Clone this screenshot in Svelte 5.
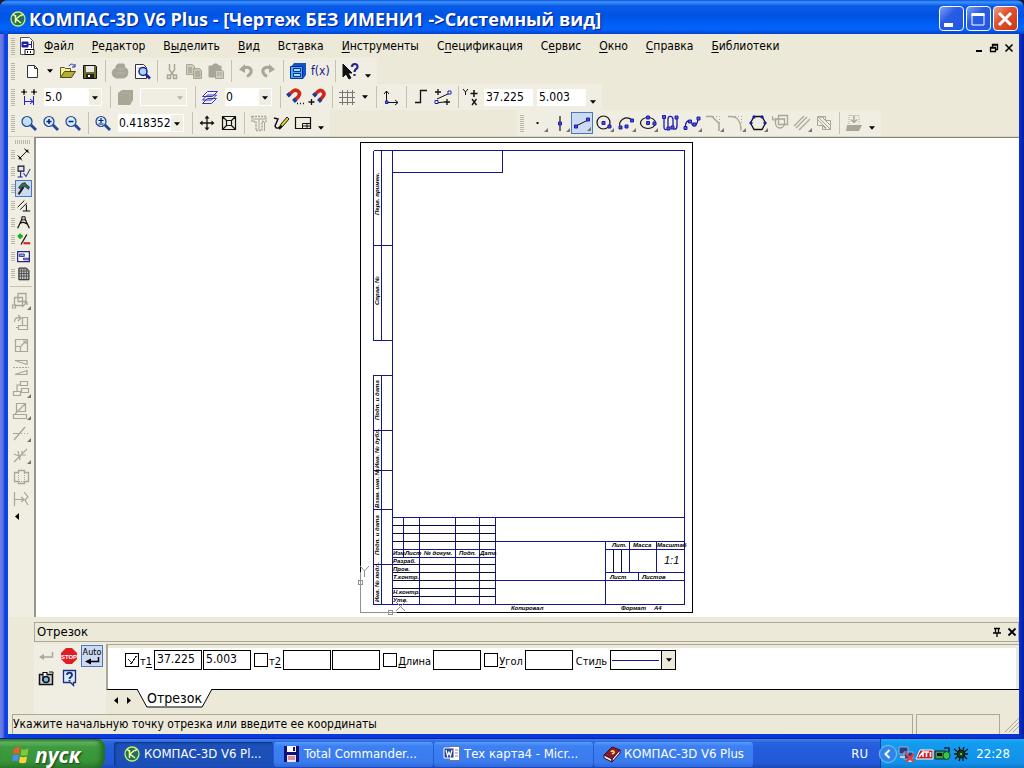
<script>
  const K = '#111';
  const B = '#1c1ca8';
  const G = '#a9a695';
  const N = 'none';

  // every glyph sits on an 18x18 grid: [path, stroke, fill, width, dash]
  const icons = {
    doc: [['M3.5 .5h9l4 4v13h-13z', '#555', '#fff'], ['M5 5h6v5H5z', B, B], ['M11 7.5h3M14.5 4v7', B, N], ['M6.5 7.5h3', '#fff', N], ['M8 12.5h9v5H8z', K, '#fff'], ['M10 15h1M13 15h1', K, N, 2]],
    new: [['M5 3h7l3 3v10H5z', N, '#fff'], ['M4.5 3.5v12h10v-9l-3-3z', '#333', N], ['M11.5 3.5v3h3', '#333', N]],
    open: [['M1.5 15.5v-10h4l1 1h5v3', '#5d5a13', '#f4efa0'], ['M1.5 15.5l4-6h11l-4 6z', '#4d4a10', '#b5ad3a'], ['M10 4c2-3 4-2 5.5 0M16 2v3h-3', B, N]],
    save: [['M2.5 3.5h12l1 1v12h-13z', K, '#6b6d28'], ['M5 4h8v6H5z', N, '#e9e9e9'], ['M5 12h8v4H5z', N, '#222'], ['M7 13h2v2H7z', N, '#fff']],
    print: [['M5 7V4l2-2h6l1 4 2 1 1 3-1 4-3 2H5l-3-2-1-4 2-3z', G, G], ['M5 11h9M7 7h6', '#bab7a8', N]],
    preview: [['M2.5 2.5h8l3 3v11h-11z', '#333', '#fff'], ['M4.5 6h3', '#999', N], ['M6 9.5a4 4 0 1 1 8 0 4 4 0 1 1-8 0', B, '#a9d7ee', 1.5], ['M13 12.5l4 4', B, N, 2.5]],
    cut: [['M6.500 2v6l4 5M11.500 2v6l-4 5', G, N, 1.5], ['M4.5 13h3v3.500h-3zM10.5 13h3v3.500h-3z', G, N, 1.5]],
    copy: [['M1.5 2.500h6l2 2v8h-8z', G, '#d0cdbd'], ['M3 6h4M3 8h4M3 10h4', G, N, 1.400], ['M8.5 6.500h6l2 2v8h-8z', G, '#c8c5b5'], ['M10 10h5M10 12h5M10 14h5', G, N, 1.400]],
    paste: [['M2 4h3l2-2h3l2 2h2v11H2z', G, G], ['M8.5 8.5h7l1 1v7h-8z', G, '#cfccbc'], ['M10 11h5M10 13h5', G, N]],
    undo: [['M6 6.500c5-3 9 0 8 4-1 2-2 3-4 4', G, N, 3], ['M2 7.500L8 2v9z', N, G]],
    redo: [['M12 6.500c-5-3-9 0-8 4 1 2 2 3 4 4', G, N, 3], ['M16 7.500L10 2v9z', N, G]],
    manager: [['M2 5l3-4h12v12l-3 4H2z', N, '#1552c8'], ['M1.5 4.5h12v12h-12z', '#0a2f96', '#4da8ee'], ['M4.5 6.5h7v3h-7zM4.5 11.5h7v3h-7z', '#0a2f96', '#a6e0fa']],
    fx: [],
    help: [['M2 2v13l3-3 3 5 2-1-3-5h4z', K, K], ['M11 5c0-4 6-4 5.5 0 0 2-3 2-3 5M13.5 12v2', '#25258d', N, 2.2]],
    step: [['M4 1v6M1 4h6M14 1v6M11 4h6', K, N], ['M3 4h2M13 4h2', K, N, 2.5], ['M4.5 8v9M13.5 8v9M5 13.5h8M10 11l3 2.5-3 2.5', '#2222d0', N]],
    macro: [['M2 5l4-3h11v10l-3 5H2z', N, G], ['M5 5h9v9', '#b4b1a1', N]],
    layers: [['M1.5 15.5l5-5h9l-5 5zM1.5 12l5-5h9l-5 5zM1.5 8.5l5-5h10l-5 5z', '#3434b8', '#f2f2fa']],
    magnet: [['M2.500 7L6.500 3.500c4-3.500 9 1 6 5L8.500 12.500', '#d02818', N, 3.5], ['M1.500 8l2.500-2.300M7.500 13.500l2.500-2.500', '#153ea8', N, 4], ['M11 15.5h1M14 15.5h1M17 15.5h1', K, N, 1.5]],
    magnet2: [['M6.500 7L10 3.500c3-3 8 1 5 5L11.500 12.500', '#d02818', N, 3.5], ['M5.500 8l2.300-2.300M10.500 13.500l2.500-2.500', '#153ea8', N, 4], ['M3.500 11v6M.5 14h6', K, N, 1.3]],
    grid: [['M1 4.5h16M1 9.5h16M1 14.5h16M4.5 2v15M9.5 2v15M14.5 2v15', '#777', N]],
    ucs: [['M4.5 14V3M2 6l2.5-3L7 6M5 14.5h11M13 12l3 2.5-3 2.5', K, N], ['M3.500 13h2.500v2.500H3.500z', B, '#6a6ae0']],
    ortho: [['M3 14.5h5.5v-12H15', K, N, 1.3]],
    snaps: [['M4 1v6M1 4h6M13 11v6M10 14h6', K, N, 1.3], ['M3 11L16 5M2 15l8-1', K, N], ['M1 12.500h3v3H1zM14 3h3v3h-3z', B, '#fff']],
    yx: [['M1 1l2.5 3L6 1M3.5 4v3', K, N], ['M12 2v7M8.5 5.5h7', K, N, 1.5], ['M10 11l4.500 6M14.500 11l-4.500 6', K, N, 1.3]],
    zoom: [['M2 7.5a5 5 0 1 1 10 0 5 5 0 1 1-10 0', '#24449b', '#bfe4ee', 1.2], ['M11 11l5 5', '#24449b', N, 2.8]],
    zoomIn: [['M2 7.5a5 5 0 1 1 10 0 5 5 0 1 1-10 0', '#24449b', '#d4eef4', 1.2], ['M11 11l5 5', '#24449b', N, 2.8], ['M4.5 7.5h5M7 5v5', '#111a80', N, 1.5]],
    zoomOut: [['M2 7.5a5 5 0 1 1 10 0 5 5 0 1 1-10 0', '#24449b', '#d4eef4', 1.2], ['M11 11l5 5', '#24449b', N, 2.8], ['M4.5 7.5h5', '#111a80', N, 1.5]],
    zoomBoth: [['M2 7.5a5 5 0 1 1 10 0 5 5 0 1 1-10 0', '#24449b', '#d4eef4', 1.2], ['M11 11l5 5', '#24449b', N, 2.8], ['M4.5 6.5h5M7 4v5M4.5 10h5', '#111a80', N, 1.2]],
    pan: [['M9 3v12M3 9h12', K, N, 1.3], ['M9 1.500l2.500 3h-5zM9 16.500l2.500-3h-5zM1.500 9l3-2.500v5zM16.500 9l-3-2.500v5z', N, K]],
    fit: [['M2.5 2.5h13v13h-13zM6.5 6.5h5v5h-5zM3 3l4 4M15 3l-4 4M3 15l4-4M15 15l-4-4', K, N, 1.2]],
    params: [['M2 2.5h14v5h-4v9H6v-9H2z', G, N, 1.5, '2 1'], ['M3 5h12M9 5v11M14.500 8v9', G, N]],
    pen: [['M2 4l4 1-3 7c1 3 4 3 6-1', K, N, 1.5], ['M8 14l1-4 6-7 2 2-6 7z', '#222', '#d8cc35'], ['M7 15l3-3', K, N, 2]],
    view: [['M1.5 3.5h15v11h-15z', K, N, 1.2], ['M8.5 9.5h8v5h-8zM9 12h7M13 10v4', K, N]],
    point: [['M7.5 9h2', K, N, 2]],
    vline: [['M9 2v15', K, N, 1.2], ['M7.5 8h3v3h-3z', B, '#4a4ae0']],
    line: [['M3 12l12-6', K, N], ['M1.5 11h3v3h-3zM13.5 4h3v3h-3z', B, '#4a4ae0']],
    circle: [['M2 8.5a6.5 6.5 0 1 1 13 0 6.5 6.5 0 1 1-13 0', K, N, 1.2], ['M7 7.5h3v3H7zM13 11h3v3h-3z', B, '#4a4ae0']],
    arc: [['M3 13C1 6 9 1 15 6', K, N, 1.2], ['M2 12h3v3H2zM8 11h3v3H8zM13.5 5h3v3h-3z', B, '#4a4ae0']],
    ellipse: [['M1.500 9a7.5 5.5 0 1 1 15 0 7.5 5.5 0 1 1-15 0', K, N, 1.2], ['M7.5 7.5h3v3h-3zM7.5 2h3v3h-3zM14 8h3v3h-3z', B, '#4a4ae0']],
    curves: [['M3 4v9c0 4 4 3 4 0V5c0-3 4-4 5 0v8c0 3 4 3 4-1V4', B, N, 1.3], ['M1.5 1.5h3v3h-3zM6 13h3v3H6zM10 12h3v3h-3zM14 2h3v3h-3z', B, '#5a5ae0']],
    spline: [['M2 14c1-11 7-7 7-4 1 4 6 1 6-6', B, N, 1.3], ['M1 12.500h3v3H1zM5.5 6h3v3h-3zM10 9h3v3h-3zM14 3h3v3h-3z', B, '#5a5ae0']],
    fillet: [['M1 2.500h6l7 7V17', G, N, 1.5], ['M8 2.500h6.5V10', G, N, 1, '1 2']],
    chamfer: [['M1 2.500h3c6 0 10 5 10 14', G, N, 1.5], ['M8 2.500h6.5V10', G, N, 1, '1 2']],
    polygon: [['M5 2.5h8L16.5 9 13 15.5H5L1.5 9z', K, N, 1.3], ['M1 8h2v2H1zM4 2h2v2H4zM12 2h2v2h-2zM15 8h2v2h-2z', B, B]],
    contour: [['M1.5 2v4h4M3.500 4L1.500 6', G, N], ['M7.5 1.5h9v9h-9zM4.5 9a4.5 5 0 1 0 9 0V5h-9z', G, N, 1.3]],
    hatch: [['M1 12L11 2M3 14L14 3M6 16L17 5', G, N, 1.2]],
    region: [['M2.5 2.5h8v4h5v9h-8v-4h-5zM3 6l8 8M3 3l12 12M7 3l8 8M4 3l5 0M8 12l3 3', G, N]],
    base: [['M2 11h15l-3 6H1z', N, G], ['M4 10V1.500h10v8', G, N, 1, '1 1'], ['M9 2v6M6 5.500l3 3 3-3', G, N, 1.5]],

    dim: [['M4 14L14 4M2 10l5 6M10 2l6 5', K, N, 1.2], ['M3 15l1-4 3 3zM15 3l-1 4-3-3z', N, K]],
    symbols: [['M2.5 2.5h7v6h-7z', K, '#dfe4ff', 1.3], ['M5.5 9v6M2 15.5h6', B, N, 1.3], ['M9 11l3 4 5-9', '#3a3a9a', N, 1.3]],
    hammer: [['M3 8l4-5 4-1 1 2 4 3-1 3-4-3-2-1-3 4z', '#17362c', '#3a6a58'], ['M9 7l-6 9', '#222', N, 2.5]],
    paramCol: [['M2 11l8-8M5 14l8-8', K, N, 1.2], ['M12.5 8v7M8 15.5h9', K, N, 1.3]],
    measure: [['M8 3L2 16M10 3l6 13M5 10c3-2 6-1 8 1', K, N, 1.5], ['M7 2h4v4H7z', K, '#bbb']],
    edit: [['M5 2v6M2 5h6', '#12b11d', N, 3], ['M6 15l7-12', K, N, 1.5], ['M9 13.5h8', '#d91c1c', N, 2.5]],
    spec: [['M2 3h14v12H2z', '#26268c', '#fff', 1.5], ['M4 6h6v3H4zM9 11h6v2H9z', '#26268c', '#91a5e6']],
    table: [['M3.5 2.5h9l3 3v11h-12z', K, '#c8c8c8', 1.2], ['M3 6h12M3 9h12M3 12h12M6.5 3v13M9.5 3v13M12.5 3v13', '#444', N]],
    move: [['M6 1.500h8v8H6zM2.5 5.5h8v8h-8z', G, N, 1.3], ['M.5 13h3v3H.5zM10 15l5-5M12 10h3v3', G, N, 1.2]],
    rotate: [['M2.5 8c0-4 2-5 6-4M6 1l3 3-3 3M6.5 11.5h9v4h-9zM10.5 3.5h5v8h-5zM4 13.500h3', G, N, 1.2]],
    scale: [['M3.5 3.5h12v12h-12zM3.5 10.5h5v5h-5zM9 10l5-5M11 5h3v3', G, N, 1.2]],
    mirror: [['M3 2.500h12v4zM15 12.500v4H3z', G, N, 1.2], ['M1 9.5h16', G, N, 1, '2 1']],
    copies: [['M8.5 1.5h7v4h-7zM9.5 8.5h7v4h-7zM1.5 11.5h7v4h-7zM5 11V5h3', G, N, 1.2]],
    deform: [['M4.5 1.5h9v8h-9zM1.5 12.5h13v4h-13zM3 12L13 2', G, N, 1.2]],
    trim: [['M2 16L13 3', G, N, 1.3], ['M1 9.5h7', G, N], ['M9 9.500h8', G, N, 1, '1 2']],
    split: [['M2 16L15 3M2 8l7 3M6 5l2 9M10 5v4h4', G, N, 1.2]],
    outline: [['M2.5 4.5h4v-2h6v2h4v9h-4v2h-6v-2h-4z', G, N, 1.3], ['M6.5 5v8M12.5 5v8M7 13.500h6', G, N, 1, '1 1']],
    align: [['M2.5 2v14M3 9.5h9M9 7l3 2.5L9 12M12 2l4 5-3 3 3 5', G, N, 1.2]],

    enter: [['M15.5 5v5H4', '#aaa798', N, 1.5], ['M2 10l5-3v6z', N, '#aaa798']],
    stop: [['M6 1h6l5 5v6l-5 5H6l-5-5V6z', N, '#e01d24']],
    camera: [['M2.5 5.5h13v10h-13z', K, '#c9ccd8', 1.5], ['M6 12V3.5h4V6', K, '#fff', 1.2], ['M6 10.5a3 3 0 1 1 6 0 3 3 0 1 1-6 0', K, '#81bde0', 1.5], ['M12 3h4v2', K, N]],
    ask: [['M3.5 1.5h12v12h-2v3l-3-3h-7z', '#1c2d7c', '#d9ebff', 1.3], ['M7 6c0-3 5-3 5 0 0 2-2.5 2-2.5 4M9.5 11v1.5', '#1c2d7c', N, 1.8]],

    kompas: [['M2 9a7 7 0 1 1 14 0 7 7 0 1 1-14 0', '#c9f06a', '#24705a', 1.3], ['M6.5 5v8M12 5l-5 4 5 4M4 4l2 2M14 4l-2 2', '#eefc9a', N, 1.5]],
    floppy: [['M1 1h15v16H1z', N, '#10107a'], ['M4 1h9v6H4z', N, '#fff'], ['M4 10h9v7H4z', N, '#e8e8f8'], ['M5 12h7M5 14h7', '#c33', N], ['M10 2h2v4h-2z', N, '#10107a']],
    word: [['M6.5 1.5h10v14h-10z', '#778', '#fff'], ['M12 5h3M12 8h3M12 11h3', '#88a', N], ['M1 3h10v10H1z', '#fff', '#233f8f'], ['M3 5l1.5 6L6 7l1.5 4L9 5', '#fff', N, 1.2]],
    book: [['M1 10L9 2l8 3-8 9z', '#3d0c18', '#8e1a32'], ['M1 10v3l8 4v-3zM9 14l8-9v3l-8 9z', '#3d0c18', '#eee'], ['M8 7c1-2 4-1 3 1l-2 1', '#ffdf5a', N, 1.5]],
    net: [['M1 2h9v7H1zM6 7h9v7H6z', '#aab', '#233f8f'], ['M2 12h5M9 16h7', '#ccd', N, 2], ['M8 9l8 8M16 9l-8 8', '#e33c3c', N, 2.2]],
    ati: [['M4 5h13v9H0z', '#fff', '#d01d22'], ['M3 12l4-5v5M8 7h5M10.500 7v5M14.5 7v5', '#fff', N, 1.6]],
    plug: [['M1 6h11v8H1z', '#123', '#3f9a4a'], ['M3 8h5v3H3z', N, '#111'], ['M9 10.500a3.500 4 0 1 1 7 0 3.500 4 0 1 1-7 0', '#0b4a18', '#39c24b'], ['M10 3h5v4', '#123', N, 1.5]],
    spider: [['M5 9a4 4 0 1 1 8 0 4 4 0 1 1-8 0', K, '#173d13'], ['M2 4l4 3M2 9h3M3 14l3-3M16 4l-4 3M16 9h-3M15 14l-3-3M7 2l1 3M12 2l-1 3M7 16l1-3M11 16v-3', K, N, 1.3], ['M8 8h2v2H8z', N, '#5ec24a']]
  };

  const menu = [['', 'Ф', 'айл'], ['', 'Р', 'едактор'], ['В', 'ы', 'делить'], ['', 'В', 'ид'], ['Вст', 'а', 'вка'], ['', 'И', 'нструменты'],
    ['С', 'п', 'ецификация'], ['С', 'е', 'рвис'], ['', 'О', 'кно'], ['', 'С', 'правка'], ['', 'Б', 'иблиотеки']];

  const standard = [['new', 'Создать'], 'caret', ['open', 'Открыть'], ['save', 'Сохранить'], 'sep', ['print', 'Печать'], ['preview', 'Просмотр'], 'sep',
    ['cut', 'Вырезать'], ['copy', 'Копировать'], ['paste', 'Вставить'], 'sep', ['undo', 'Отменить'], ['redo', 'Повторить'], 'sep',
    ['manager', 'Менеджер библиотек'], ['fx', 'Переменные'], 'sep', ['help', 'Справка'], 'more'];

  const geometry = [['point', 'Точка', 1], ['vline', 'Вспомогательная прямая', 1], ['line', 'Отрезок', 1], ['circle', 'Окружность', 1], ['arc', 'Дуга', 1],
    ['ellipse', 'Эллипс', 1], ['curves', 'Непрерывный ввод'], ['spline', 'Кривая Безье', 1], ['fillet', 'Фаска', 1], ['chamfer', 'Скругление', 1],
    ['polygon', 'Многоугольник', 1], ['contour', 'Собрать контур'], ['hatch', 'Эквидистанта', 1], ['region', 'Штриховка'], 'sep', ['base', 'Спроецировать'], 'more'];

  const panels = [['dim', 'Размеры'], ['symbols', 'Обозначения'], ['hammer', 'Редактирование'], ['paramCol', 'Параметризация'],
    ['measure', 'Измерения'], ['edit', 'Выделение'], ['spec', 'Спецификация'], ['table', 'Отчеты']];

  const editing = [['move', 'Сдвиг', 1], ['rotate', 'Поворот'], ['scale', 'Масштабирование'], ['mirror', 'Симметрия'], ['copies', 'Копирование', 1],
    ['deform', 'Деформация', 1], ['trim', 'Усечь кривую', 1], ['split', 'Разбить кривую', 1], ['outline', 'Собрать'], ['align', 'Продлить']];

  const tasks = [['kompas', 'КОМПАС-3D V6 Pl...'], ['floppy', 'Total Commander...'], ['word', 'Тех карта4 - Micr...'], ['book', 'КОМПАС-3D V6 Plus']];

  const sideLabels = [[73, 'Перв. примен.'], [163, 'Справ. №'], [278, 'Подп. и дата'], [326, 'Инв. № дубл.'], [366, 'Взам. инв. №'], [413, 'Подп. и дата'], [460, 'Инв. № подл.']];

  const stamp = [[33, 413, 'Изм.'], [45, 413, 'Лист'], [64, 413, '№ докум.'], [99, 413, 'Подп.'], [120, 413, 'Дата'],
    [33, 421, 'Разраб.'], [33, 429, 'Пров.'], [33, 437, 'Т.контр.'], [33, 452, 'Н.контр.'], [33, 460, 'Утв.'],
    [252, 405, 'Лит.'], [273, 405, 'Масса'], [297, 405, 'Масштаб'], [250, 437, 'Лист'], [282, 437, 'Листов'],
    [151, 468, 'Копировал'], [261, 468, 'Формат'], [294, 468, 'A4']];

  let t1 = true;
</script>

{#snippet icon(name)}
  <svg class="icon" width="18" height="18" viewBox="0 0 18 18" aria-hidden="true">
    {#each icons[name] as [d, stroke, fill, width = 1, dash = 'none']}
      <path {d} {stroke} {fill} stroke-width={width} stroke-dasharray={dash} />
    {/each}
    {#if name === 'fx'}
      <text x="0" y="13" class="fx">f(x)</text>
    {:else if name === 'stop'}
      <text x="9" y="12" class="stop">STOP</text>
    {/if}
  </svg>
{/snippet}

{#snippet arrow()}
  <svg class="arrow" width="7" height="4" viewBox="0 0 7 4" aria-hidden="true"><path d="M0 0h7L3.5 4z" fill="currentColor" /></svg>
{/snippet}

{#snippet tool(item)}
  {#if item === 'sep'}
    <span class="sep"></span>
  {:else if item === 'caret'}
    <button class="caret" aria-label="Список">{@render arrow()}</button>
  {:else if item === 'more'}
    <button class="caret low" aria-label="Параметры панели">{@render arrow()}</button>
  {:else}
    <button class="tool" class:active={item[0] === 'line' || item[0] === 'hammer'} class:corner={item[2]} aria-label={item[1]}>{@render icon(item[0])}</button>
  {/if}
{/snippet}

{#snippet combo(label, value, size, disabled)}
  <span class="combo {size}" class:disabled>
    <select aria-label={label} {disabled}><option>{value}</option></select>
    {@render arrow()}
  </span>
{/snippet}

<div class="desktop">
  <main class="window">
    <header class="titlebar">
      {@render icon('kompas')}
      <h1>КОМПАС-3D V6 Plus - [Чертеж БЕЗ ИМЕНИ1 -&gt;Системный вид]</h1>
      <button class="win" aria-label="Свернуть"><svg width="22" height="22" viewBox="0 0 22 22"><path d="M4 15h9v4H4z" fill="#fff" /></svg></button>
      <button class="win" aria-label="Развернуть"><svg width="22" height="22" viewBox="0 0 22 22"><path d="M5 6h12v11H5z" stroke="#fff" fill="none" /><path d="M4.500 5h13v3h-13z" fill="#fff" /></svg></button>
      <button class="win close" aria-label="Закрыть"><svg width="22" height="22" viewBox="0 0 22 22"><path d="M5 5l12 12M17 5L5 17" stroke="#fff" stroke-width="3" /></svg></button>
    </header>

    <div class="client">
      <nav class="menubar">
        <span class="grip"></span>
        {@render icon('doc')}
        {#each menu as [before, key, after]}
          <button>{before}<u>{key}</u>{after}</button>
        {/each}
        <span class="mdi">
          <button aria-label="Свернуть документ"><svg width="10" height="10" viewBox="0 0 10 10"><path d="M2 8h6" stroke="#000" stroke-width="2" /></svg></button>
          <button aria-label="Восстановить документ"><svg width="10" height="10" viewBox="0 0 10 10"><path d="M3.5 4V1.5h5v5H7M1.5 4.5h5v4h-5zM3 2h6M1 5h6" stroke="#000" fill="none" stroke-width="1.3" /></svg></button>
          <button aria-label="Закрыть документ"><svg width="10" height="10" viewBox="0 0 10 10"><path d="M1.5 1.5l7 7M8.5 1.5l-7 7" stroke="#000" stroke-width="1.6" /></svg></button>
        </span>
      </nav>

      <div class="row">
        <div class="toolbar">
          <span class="grip"></span>
          {#each standard as item}{@render tool(item)}{/each}
        </div>
      </div>

      <div class="row">
        <div class="toolbar state">
          <span class="grip"></span>
          {@render tool(['step', 'Шаг курсора'])}
          {@render combo('Шаг курсора', '5.0', 'mid', false)}
          {@render tool('sep')}
          {@render tool(['macro', 'Состояние видов'])}
          {@render combo('Вид', '', 'small', true)}
          {@render tool('sep')}
          {@render tool(['layers', 'Слои'])}
          {@render combo('Слой', '0', 'small', false)}
          {@render tool('sep')}
          {@render tool(['magnet', 'Установка привязок'])}
          {@render tool(['magnet2', 'Запретить привязки'])}
          {@render tool('sep')}
          {@render tool(['grid', 'Сетка'])}
          {@render tool('caret')}
          {@render tool('sep')}
          {@render tool(['ucs', 'Локальная СК'])}
          {@render tool('sep')}
          {@render tool(['ortho', 'Ортогональное черчение'])}
          {@render tool(['snaps', 'Округление'])}
          {@render tool('sep')}
          {@render icon('yx')}
          <input class="coord" aria-label="Координата X" value="37.225">
          <input class="coord" aria-label="Координата Y" value="5.003">
          {@render tool('more')}
        </div>
      </div>

      <div class="row">
        <div class="toolbar zooms">
          <span class="grip"></span>
          {@render tool(['zoom', 'Увеличить рамкой'])}
          {@render tool(['zoomIn', 'Увеличить'])}
          {@render tool(['zoomOut', 'Уменьшить'])}
          {@render tool('sep')}
          {@render tool(['zoomBoth', 'Приблизить'])}
          {@render combo('Масштаб', '0.418352', 'wide', false)}
          {@render tool('sep')}
          {@render tool(['pan', 'Сдвинуть'])}
          {@render tool(['fit', 'Показать все'])}
          {@render tool('sep')}
          {@render tool(['params', 'Параметризация'])}
          {@render tool(['pen', 'Перестроить'])}
          {@render tool(['view', 'Вид'])}
          {@render tool('more')}
        </div>
        <div class="toolbar geometry">
          <span class="grip"></span>
          {#each geometry as item}{@render tool(item)}{/each}
        </div>
      </div>

      <div class="work">
        <aside>
          <span class="grip flat"></span>
          {#each panels as item}
            <div class="panel-key"><span class="grip"></span>{@render tool(item)}</div>
          {/each}
          <hr>
          {#each editing as item}{@render tool(item)}{/each}
          <button class="scroll" aria-label="Далее"><svg width="4" height="7" viewBox="0 0 4 7"><path d="M4 0v7L0 3.5z" /></svg></button>
        </aside>

        <section class="canvas">
          <svg width="344" height="475" viewBox="-4 0 344 475" role="img" aria-label="Лист чертежа">
            <path class="sheet" d="M.5.5h332v470H.5z" />
            <path class="ink" d="M13.5 8.5h311v454h-311M13.5 8.5v190h19M13.5 103.5h19M21.5 8.5v190M32.5 8.5v454M142.5 8.5v22h-110" />
            <path class="ink" d="M32.5 233.5h-19v229M21.5 233.5v229M13.5 288.5h19M13.5 328.5h19M13.5 367.5h19M13.5 422.5h19" />
            <path class="ink" d="M32.5 375.5h292M135.5 375.5v87M43.5 375.5v40M59.5 375.5v87M95.5 375.5v87M119.5 375.5v87M32.5 407.5h103M32.5 415.5h103M135.5 399.5h189M135.5 438.5h189M245.5 399.5v63M245.5 407.5h79M245.5 430.5h79M269.5 399.5v31M296.5 399.5v31M278.5 430.5v8" />
            <path class="thin" d="M32.5 383.5h103M32.5 391.5h103M32.5 399.5h103M32.5 422.5h103M32.5 430.5h103M32.5 438.5h103M32.5 446.5h103M32.5 454.5h103M253.5 408v22M261.5 408v22" />
            {#each sideLabels as [y, label]}
              <text class="tiny" transform="rotate(-90 19 {y})" x="19" y={y}>{label}</text>
            {/each}
            {#each stamp as [x, y, label]}
              <text class="tiny" {x} {y}>{label}</text>
            {/each}
            <text class="ratio" x="304" y="422">1:1</text>
            <path class="blank" d="M.5 430v40.5h36" />
            <path class="axis" d="M.5 430v40.5h36M-1.5 442.5h4v-4h-4zM28 468.5h4v4h-4z" />
            <path class="letters" d="M0 424l4.500 5v6M9 424l-4.500 5M36 460l9 9M45 460l-9 9" />
          </svg>
        </section>
      </div>

      <section class="props">
        <header>
          <h2>Отрезок</h2>
          <button aria-label="Закрепить"><svg width="10" height="10" viewBox="0 0 10 10"><path d="M2 1.5h6M3.5 1v5M6.5 1v5M1 6h8M5 6v4" stroke="#000" stroke-width="1.3" /></svg></button>
          <button aria-label="Закрыть панель"><svg width="10" height="10" viewBox="0 0 10 10"><path d="M1.5 1.5l7 7M8.5 1.5l-7 7" stroke="#000" stroke-width="1.8" /></svg></button>
        </header>
        <div class="props-main">
          <div class="special">
            {@render tool(['enter', 'Создать объект'])}
            {@render tool(['stop', 'Прервать команду'])}
            <button class="tool active auto"><span>Auto</span><svg width="16" height="8" viewBox="0 0 16 8" aria-hidden="true"><path d="M14.5 0v4.5H5" stroke="#000" fill="none" stroke-width="1.5" /><path d="M1 4.5l6-3v6z" /></svg></button>
            {@render tool(['camera', 'Запомнить состояние'])}
            {@render tool(['ask', 'Справка'])}
          </div>
          <div class="props-body">
            <form>
              <label class="check"><input type="checkbox" bind:checked={t1}><span>т<u>1</u></span></label>
              <input class="field" aria-label="т1 X" value="37.225">
              <input class="field" aria-label="т1 Y" value="5.003">
              <label class="check"><input type="checkbox"><span>т<u>2</u></span></label>
              <input class="field" aria-label="т2 X">
              <input class="field" aria-label="т2 Y">
              <label class="check"><input type="checkbox"><span><u>Д</u>лина</span></label>
              <input class="field" aria-label="Длина">
              <label class="check"><input type="checkbox"><span><u>У</u>гол</span></label>
              <input class="field" aria-label="Угол">
              <label class="style-label" for="style">Сти<u>л</u>ь</label>
              <span class="style">
                <select id="style"><option label=" "></option></select>
                <span class="stroke"></span>
                <span class="drop">{@render arrow()}</span>
              </span>
            </form>
            <div class="tabs">
              <button class="turn" aria-label="Назад"><svg width="4" height="7" viewBox="0 0 4 7"><path d="M4 0v7L0 3.5z" /></svg></button>
              <button class="turn" aria-label="Вперед"><svg width="4" height="7" viewBox="0 0 4 7"><path d="M0 0v7l4-3.5z" /></svg></button>
              <button class="tab">
                <svg viewBox="0 0 76 19" preserveAspectRatio="none" aria-hidden="true"><path d="M0 0l10 18h56L76 0" fill="#fff" stroke="#000" /></svg>
                <span>Отрезок</span>
              </button>
            </div>
          </div>
        </div>
      </section>

      <footer class="status">
        <p>Укажите начальную точку отрезка или введите ее координаты</p>
        <span class="cell"></span>
        <svg width="16" height="18" viewBox="0 0 16 18" aria-hidden="true"><path d="M2 18L16 4M6 18L16 8M10 18l6-6" stroke="#aca899" fill="none" /></svg>
      </footer>
    </div>
  </main>

  <footer class="taskbar">
    <button class="start">
      <svg width="20" height="20" viewBox="0 0 20 20" aria-hidden="true">
        <path d="M3 4c2-2 4-2 6-1L8 9C6 8 4 8 2 9z" fill="#ee5a2c" />
        <path d="M10.5 4c2 1 4 1 7-1l-1 7c-3 1-5 1-7 0z" fill="#82c83c" />
        <path d="M2 10.5c2-1 4-1 6 0l-1 6c-2-1-4-1-6 0z" fill="#4b8df0" />
        <path d="M9 11.5c2 1 4 1 7 0l-1 6c-2 1-5 1-7 0z" fill="#fbd33b" />
      </svg>
      пуск
    </button>
    <div class="tasks">
      {#each tasks as [glyph, name], i}
        <button class:current={i === 0}>{@render icon(glyph)}<span>{name}</span></button>
      {/each}
    </div>
    <span class="lang">RU</span>
    <div class="tray">
      <button class="expand" aria-label="Показать значки"><svg width="16" height="16" viewBox="0 0 16 16"><path d="M9.5 4L5.5 8l4 4" stroke="#fff" fill="none" stroke-width="2" /></svg></button>
      {#each ['net', 'ati', 'plug', 'spider'] as name}{@render icon(name)}{/each}
      <time>22:28</time>
    </div>
  </footer>
</div>

<style>
  :global(body) {
    background: #1c1c24;
  }

  .desktop {
    display: flex;
    flex-direction: column;
    min-height: 100vh;
    overflow: hidden;
    font-family: 'DejaVu Sans Condensed', 'DejaVu Sans', sans-serif;
    font-size: 12px;
    line-height: 16px;
    color: #000;
  }

  .desktop *,
  .desktop *::before,
  .desktop *::after {
    box-sizing: border-box;
  }

  button, input, select {
    margin: 0;
    padding: 0;
    border: 0;
    border-radius: 0;
    background: none;
    font: inherit;
    color: inherit;
  }

  svg {
    display: block;
    flex: none;
  }

  h1, h2, p {
    margin: 0;
    font: inherit;
  }

  .window {
    display: flex;
    flex-direction: column;
    flex: 1;
    padding: 0 5px 4px 8px;
    background: linear-gradient(90deg, #7080e8 0, #5a70e0 3px, #0a3be0 5px, #1148e8 7px, #0a3be0 9px, #0a34d8 calc(100% - 5px), #001ba0 100%);
    border-bottom: 1px solid #0a1f9c;
    border-radius: 8px 8px 0 0;
  }

  .titlebar {
    display: flex;
    align-items: center;
    gap: 2px;
    height: 34px;
    margin: 0 -5px 0 -8px;
    padding: 3px 6px 0 9px;
    border-radius: 8px 8px 0 0;
    background: linear-gradient(#0a52dc 0, #3c94fa 2px, #0a5ae8 6px, #0054e3 16px, #0062f8 26px, #0560f8 30px, #0040c8 34px);
  }

  h1 {
    flex: 1;
    overflow: hidden;
    white-space: nowrap;
    font: bold 18px/24px 'Open Sans', sans-serif;
    color: #fff;
    text-shadow: 1px 1px 1px #0a1883;
  }

  .win {
    width: 25px;
    height: 25px;
    border: 1px solid #fff;
    border-radius: 4px;
    background: linear-gradient(135deg, #7ba2f5, #2a5ce4 40%, #2258e0);
  }

  .win.close {
    background: linear-gradient(135deg, #f0a08a, #e0532f 40%, #c93a14);
  }

  .client {
    display: flex;
    flex-direction: column;
    flex: 1;
    background: #ece9d8;
  }

  .grip {
    flex: none;
    width: 4px;
    height: 17px;
    margin: 0 6px 0 3px;
    background: repeating-linear-gradient(#b9b6a6 0, #b9b6a6 1px, transparent 1px, transparent 2px);
  }

  .menubar {
    display: flex;
    align-items: center;
    height: 24px;
  }

  .menubar .grip {
    margin-right: 2px;
  }

  .menubar > button {
    padding: 0 9px;
    line-height: 20px;
    white-space: nowrap;
  }

  u {
    text-underline-offset: 2px;
  }

  .mdi {
    display: flex;
    gap: 5px;
    margin: 4px 5px 0 auto;
  }

  .row {
    display: flex;
    height: 26px;
  }

  .toolbar {
    display: flex;
    align-items: center;
    height: 26px;
    padding-right: 2px;
    background: #f0eee2;
    border-radius: 0 3px 3px 0;
  }

  .geometry {
    margin-left: auto;
    margin-right: 138px;
  }

  .geometry .grip,
  .state .grip,
  .zooms .grip {
    margin-right: 3px;
  }

  .tool {
    position: relative;
    display: flex;
    align-items: center;
    justify-content: center;
    flex: none;
    width: 22px;
    height: 22px;
  }

  .tool.active {
    border: 1px solid #4a78c0;
    background: #ccdaf2;
  }

  .corner::after {
    content: '';
    position: absolute;
    right: 1px;
    bottom: 2px;
    border: 2px solid transparent;
    border-right-color: #77756a;
    border-bottom-color: #77756a;
  }

  .sep {
    flex: none;
    width: 8px;
    height: 22px;
    background: linear-gradient(#c5c2b2, #c5c2b2) center / 1px 100% no-repeat;
  }

  .caret {
    display: flex;
    align-items: center;
    justify-content: center;
    width: 14px;
    height: 22px;
  }

  .caret.low {
    align-items: flex-end;
    padding-bottom: 4px;
  }

  .arrow {
    width: 6px;
  }

  .combo {
    position: relative;
    display: block;
    height: 18px;
    margin: 0 4px;
    background: #f0eee2;
    border: 1px solid #fff;
  }

  .combo.mid {
    width: 58px;
  }

  .combo.small {
    width: 47px;
  }

  .combo.wide {
    width: 66px;
  }

  .combo select {
    display: block;
    width: calc(100% - 12px);
    height: 16px;
    background: #fff;
    appearance: none;
    outline: none;
    overflow: hidden;
    line-height: 16px;
  }

  .combo.disabled {
    color: #b5b2a2;
  }

  .combo.disabled select {
    background: #f0eee2;
    opacity: 1;
  }

  .combo .arrow {
    position: absolute;
    right: 3px;
    top: 7px;
  }

  .coord {
    width: 49px;
    height: 17px;
    margin-left: 4px;
    padding-left: 2px;
    background: #fff;
  }

  .fx {
    font: 12px 'DejaVu Sans Condensed', sans-serif;
    fill: #18188c;
  }

  .icon {
    overflow: visible;
  }

  .stop {
    font: bold 6px 'Liberation Sans', sans-serif;
    fill: #fff;
    text-anchor: middle;
  }

  .work {
    display: flex;
    flex: 1;
    border-top: 1px solid #d8d5c4;
  }

  aside {
    display: flex;
    flex-direction: column;
    align-items: center;
    width: 26px;
    padding-top: 3px;
    background: #f0eee2;
  }

  .flat {
    width: 16px;
    height: 4px;
    margin: 0 0 2px 3px;
    background: repeating-linear-gradient(90deg, #b9b6a6 0, #b9b6a6 1px, transparent 1px, transparent 2px);
  }

  .panel-key {
    display: flex;
    align-items: center;
    width: 26px;
    height: 17px;
  }

  .panel-key .grip {
    height: 10px;
    margin: 0;
    margin-left: 3px;
  }

  .panel-key .tool {
    width: 17px;
    height: 17px;
  }

  .panel-key .icon {
    width: 15px;
    height: 15px;
  }

  hr {
    width: 22px;
    height: 1px;
    margin: 4px 0 3px;
    border: 0;
    background: #c5c2b2;
  }

  .scroll {
    width: 8px;
    height: 12px;
    margin-right: 4px;
  }

  .canvas {
    display: flex;
    justify-content: center;
    flex: 1;
    padding-top: 4px;
    overflow: hidden;
    background: #fff;
    border-top: 1px solid #85837a;
    border-left: 2px solid #96948a;
  }

  .canvas path {
    fill: none;
    shape-rendering: crispEdges;
  }

  .sheet {
    stroke: #000;
  }

  .ink {
    stroke: #16168c;
  }

  .thin {
    stroke: #0a0a3c;
  }

  .blank {
    stroke: #fff;
  }

  .axis {
    stroke: #909090;
  }

  .canvas .letters {
    stroke: #909090;
    shape-rendering: auto;
  }

  .tiny {
    font: italic bold 6px 'Liberation Sans', sans-serif;
  }

  .ratio {
    font: italic 11px 'Liberation Sans', sans-serif;
  }

  .props {
    margin: 5px 0 0 26px;
  }

  .props header {
    display: flex;
    align-items: center;
    gap: 5px;
    height: 20px;
    padding: 0 1px 0 2px;
    border: 1px solid #aca899;
  }

  h2 {
    flex: 1;
    font-size: 13px;
  }

  .props-main {
    display: flex;
    margin-top: 2px;
  }

  .special {
    display: grid;
    grid-template-columns: repeat(3, 23px);
    grid-auto-rows: 22px;
    align-content: start;
    width: 72px;
    padding: 1px 0 0 1px;
    background: #f0eee2;
  }

  .auto {
    flex-direction: column;
    line-height: 10px;
    font-size: 9px;
  }

  .props-body {
    flex: 1;
    min-width: 0;
    border-top: 1px solid #aca899;
  }

  form {
    display: flex;
    align-items: flex-start;
    height: 45px;
    margin: 0;
    padding: 5px 0 0 15px;
    border-left: 2px solid #aca899;
    border-bottom: 1px solid #000;
    background: #fff;
    box-shadow: inset 0 3px #ece9d8, inset -3px 0 #ece9d8;
  }

  .check {
    display: flex;
    gap: 1px;
    padding: 3px 2px 0;
  }

  .check span,
  .style-label {
    font-size: 11px;
    line-height: 17px;
  }

  .check input {
    width: 14px;
    height: 14px;
    border: 1px solid #000;
    appearance: none;
    background: #fff;
  }

  .check input:checked {
    background: linear-gradient(50deg, transparent 45%, #222 45%, #222 55%, transparent 55%) 2px 5px / 4px 4px no-repeat,
      linear-gradient(125deg, transparent 45%, #222 45%, #222 57%, transparent 57%) 4px 2px / 7px 8px no-repeat;
  }

  .field {
    width: 48px;
    height: 20px;
    margin-right: 1px;
    padding: 0 0 2px 2px;
    border: 1px solid #000;
    background: #fff;
  }

  .style-label {
    padding: 3px 3px 0 2px;
  }

  .style {
    position: relative;
    display: flex;
    width: 66px;
    height: 20px;
    border: 1px solid #000;
  }

  .style select {
    width: 100%;
    appearance: none;
  }

  .stroke {
    position: absolute;
    left: 1px;
    right: 16px;
    top: 9px;
    height: 1px;
    background: #16168c;
    pointer-events: none;
  }

  .drop {
    position: absolute;
    inset: 0 0 0 auto;
    display: flex;
    align-items: center;
    justify-content: center;
    width: 14px;
    border-left: 1px solid #000;
    background: #ece9d8;
    pointer-events: none;
  }

  .tabs {
    display: flex;
    height: 24px;
    padding-left: 3px;
  }

  .turn {
    display: flex;
    align-items: center;
    justify-content: center;
    width: 13px;
    height: 20px;
  }

  .tab {
    position: relative;
    height: 18px;
    margin: -1px 0 0 2px;
    padding: 0 10px;
    font-size: 14px;
    line-height: 18px;
  }

  .tab svg {
    position: absolute;
    inset: 0;
    width: 100%;
    height: 19px;
  }

  .tab span {
    position: relative;
  }

  .status {
    display: flex;
    gap: 3px;
    height: 20px;
    padding-left: 4px;
  }

  .status p {
    flex: 1;
    overflow: hidden;
    white-space: nowrap;
    border: 1px solid #aca899;
    border-bottom: 0;
    line-height: 19px;
  }

  .cell {
    width: 84px;
    border: 1px solid #aca899;
    border-bottom: 0;
  }

  .taskbar {
    display: flex;
    align-items: center;
    height: 30px;
    background: linear-gradient(#3b86f0 0, #2a66e0 3px, #245edb 8px, #2258d8 24px, #1a44b0 30px);
    color: #fff;
    font-size: 13px;
  }

  .start {
    display: flex;
    align-items: center;
    gap: 4px;
    flex: none;
    width: 105px;
    height: 30px;
    padding: 2px 0 0 11px;
    border-radius: 0 8px 10px 0;
    background: linear-gradient(#2c7a2c 0, #62b862 3px, #3f9a3f 8px, #379437 22px, #2b7a2b 30px);
    box-shadow: inset -4px 0 5px #226a22;
    font: italic bold 21px/24px 'Open Sans', sans-serif;
    text-shadow: 1px 1px 2px #143c14;
  }

  .tasks {
    display: flex;
    flex: 1;
    gap: 1px;
    min-width: 0;
    margin-left: 9px;
  }

  .tasks button {
    display: flex;
    align-items: center;
    gap: 3px;
    flex: 0 1 159px;
    min-width: 0;
    height: 25px;
    padding-left: 9px;
    border-radius: 3px;
    background: linear-gradient(#5a9bfa 0, #3c80f2 4px, #3a7bee 20px, #3068dc 100%);
    white-space: nowrap;
  }

  .tasks button.current {
    background: #1c4fb8;
    box-shadow: inset 1px 1px 2px #0d327c;
  }

  .lang {
    margin-right: 12px;
  }

  .tray {
    display: flex;
    align-items: center;
    flex: none;
    width: 144px;
    height: 30px;
    padding-right: 14px;
    background: linear-gradient(#1cacf6 0, #129cf0 4px, #1290e8 24px, #0d76c8 30px);
    border-left: 1px solid #0c3c9c;
  }

  .expand {
    width: 16px;
    height: 16px;
    margin: 0 2px 0 -1px;
    border-radius: 8px;
    background: #2f86ea;
    box-shadow: 0 0 1px 1px #8cc4fa;
  }

  time {
    margin-left: auto;
  }
</style>
